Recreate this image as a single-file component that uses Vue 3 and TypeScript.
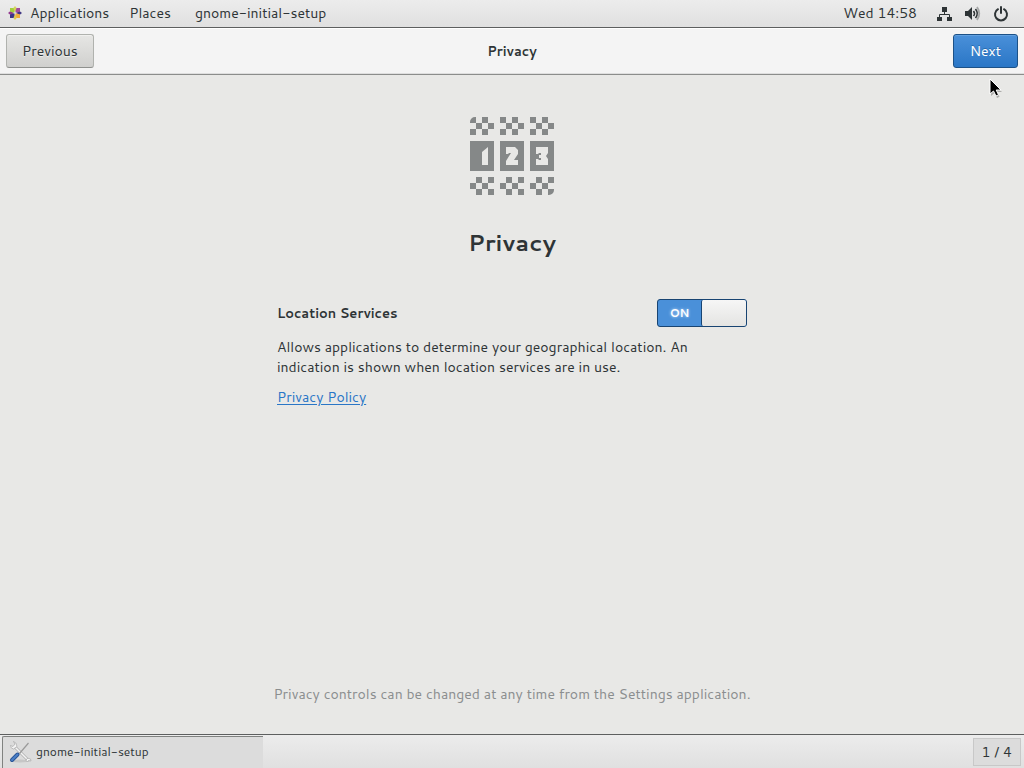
<script setup lang="ts">
import { ref } from 'vue'

const locationServices = ref(true)

interface Cell { x: number; y: number }

const columns = [0, 30, 60]

function checker(top: number, offset: number): Cell[] {
  const cells: Cell[] = []
  for (const left of columns) {
    for (let row = 0; row < 3; row++) {
      for (let col = 0; col < 4; col++) {
        if ((row + col + offset) % 2 === 0) cells.push({ x: left + col * 6, y: top + row * 6 })
      }
    }
  }
  return cells
}

const cells = [...checker(0, 0), ...checker(60, 1)].filter(
  (c) => !(c.x === 0 && c.y === 0) && !(c.x === 78 && c.y === 72),
)
</script>

<template>
  <div class="desktop">
    <header class="topbar">
      <nav class="menus">
        <button class="menu apps" type="button">
          <svg class="logo" width="14" height="14" viewBox="0 0 14 14" aria-hidden="true">
            <path d="M7 0l2 2.500L7 6 5 2.500z" fill="#d6d65c" />
            <path d="M7 14l2-2.500L7 8l-2 3.500z" fill="#dccb52" />
            <path d="M0 7l2.500-2L6 7 2.500 9z" fill="#93388f" />
            <path d="M14 7l-2.500-2L8 7l3.500 2z" fill="#3f3583" />
            <path d="M2 2h3.500L6.500 5v1.500H5L2 5.500z" fill="#a3cf3c" />
            <path d="M12 2H8.500L7.500 5v1.500H9l3-1z" fill="#a44c9b" />
            <path d="M2 12V8.500l3-1h1.500V9l-1 3z" fill="#3c3487" />
            <path d="M12 12V8.500l-3-1H7.500V9l1 3z" fill="#f0ac3a" />
          </svg>
          Applications
        </button>
        <button class="menu places" type="button">Places</button>
        <button class="menu" type="button">gnome-initial-setup</button>
      </nav>
      <div class="status">
        <time class="clock">Wed 14:58</time>
        <svg class="net" width="16" height="16" viewBox="0 0 16 16" aria-hidden="true">
          <path d="M5 1h5v5H5zM0 11h5v4H0zM10 11h5v4h-5z" fill="#2e3436" />
          <path d="M7.500 6v2.500M2.500 11V8.500h10V11" fill="none" stroke="#2e3436" />
        </svg>
        <svg class="vol" width="16" height="16" viewBox="0 0 16 16" aria-hidden="true">
          <path d="M0 5h3l4-4v13l-4-4H0z" fill="#2e3436" />
          <path d="M8.500 5q2 2.500 0 5M10.500 3q3.500 4.500 0 9" fill="none" stroke="#2e3436" stroke-width="1.600" />
          <path d="M12 1q4.500 6.500 0 13" fill="none" stroke="#a4a6a6" stroke-width="1.800" />
        </svg>
        <svg width="16" height="16" viewBox="0 0 16 16" aria-hidden="true">
          <path d="M5 3.200a6 6 0 1 0 6 0M8 1v6" fill="none" stroke="#2e3436" stroke-width="2" stroke-linecap="round" />
        </svg>
      </div>
    </header>

    <div class="headerbar">
      <div class="side"><button class="btn" type="button">Previous</button></div>
      <div class="title">Privacy</div>
      <div class="side end"><button class="btn primary" type="button">Next</button></div>
      <svg class="pointer" width="14" height="22" viewBox="0 0 14 22" aria-hidden="true">
        <path d="M2 3v15l3.500-3 2.500 5 2.500-1.200-2.300-4.800H13z" fill="#000" opacity=".25" />
        <path d="M1 1v15l3.500-3 2.500 5 2.500-1.200-2.300-4.800H12z" fill="#000" stroke="#fff" />
      </svg>
    </div>

    <main class="page">
      <svg class="emblem" width="84" height="78" viewBox="0 0 84 78" fill="#858888" aria-hidden="true">
        <path d="M6 0v6H0V5a5 5 0 0 1 5-5zM78 78v-6h6v1a5 5 0 0 1-5 5z" />
        <rect v-for="c in cells" :key="`${c.x}-${c.y}`" :x="c.x" :y="c.y" width="6" height="6" />
        <rect v-for="x in columns" :key="x" :x="x" y="24" width="24" height="30" />
        <g fill="#e8e8e6">
          <path d="M18 30v18h-6V35z" />
          <path d="M36 30h9l3 3v4l-4 6h4v5H36v-4l5-8h-2l-1 1h-2z" />
          <path d="M66 30h12v6l-2 3 2 3v6H66v-6h2l1 1h2v-2h-2v-3h2v-2h-2l-1 1h-2z" />
        </g>
      </svg>
      <h1>Privacy</h1>
      <section class="settings">
        <div class="row">
          <label class="name" for="location">Location Services</label>
          <label class="switch">
            <input id="location" v-model="locationServices" type="checkbox" role="switch" />
            <span class="state">{{ locationServices ? 'ON' : 'OFF' }}</span>
            <span class="knob"></span>
          </label>
        </div>
        <p class="about">Allows applications to determine your geographical location. An indication is shown when location services are in use.</p>
        <a class="policy" href="#">Privacy Policy</a>
      </section>
      <p class="hint">Privacy controls can be changed at any time from the Settings application.</p>
    </main>

    <footer class="taskbar">
      <button class="task" type="button">
        <svg width="24" height="24" viewBox="0 0 24 24" aria-hidden="true">
          <ellipse cx="12" cy="21" rx="10" ry="1.500" fill="#c6c6c6" />
          <path d="M6 6l13 13" stroke="#a8a8a8" stroke-width="2.800" />
          <path d="M6 6l13 13" stroke="#f4f4f4" stroke-width="1.600" />
          <path d="M5.500 1.500L7 4 5 6.500 2.500 5.500q0 3 3 3.500L9 6.500Q8.500 2 5.500 1.500zM22.500 19q-3-1.500-4 0t1 3l1-1.500 2.500.5z" fill="#f5f5f5" stroke="#a8a8a8" stroke-width=".7" />
          <path d="M20.500 3l-9 10.500" stroke="#9a9a9a" stroke-width="1.200" />
          <path d="M9.500 14.500L4 20" stroke="#2a5597" stroke-width="4" stroke-linecap="round" />
          <path d="M9.500 14.500L4 20" stroke="#4a7fc6" stroke-width="2" stroke-linecap="round" />
        </svg>
        gnome-initial-setup
      </button>
      <button class="workspace" type="button">1 / 4</button>
    </footer>
  </div>
</template>

<style>
body {
  margin: 0;
}
</style>

<style scoped>
.desktop {
  display: flex;
  flex-direction: column;
  min-height: 100vh;
  background: #e8e8e6;
  color: #2e3436;
  font-family: Cantarell, "Noto Sans", "Open Sans", sans-serif;
  font-size: 14px;
  line-height: 20px;
}
button {
  font: inherit;
  color: inherit;
  margin: 0;
}
svg {
  display: block;
  flex: none;
}
.topbar {
  display: flex;
  justify-content: space-between;
  align-items: center;
  box-sizing: border-box;
  height: 28px;
  padding: 0 15px 0 8px;
  background: linear-gradient(#ececec, #e0e0e0);
  border-bottom: 1px solid #5d5f5f;
}
.menus,
.status,
.menu {
  display: flex;
  align-items: center;
}
.menus {
  gap: 20px;
}
.menu {
  gap: 8px;
  padding: 0 0 2px;
  border: 0;
  background: none;
}
.places {
  margin-right: 4px;
}
.clock {
  margin-right: 20px;
  padding-bottom: 2px;
}
.net,
.vol {
  margin-right: 12px;
}
.headerbar {
  position: relative;
  display: flex;
  align-items: center;
  box-sizing: border-box;
  height: 47px;
  padding: 0 6px;
  background: #f4f4f4;
  border-bottom: 1px solid #8b8d8b;
  box-shadow: inset 0 1px #fff, inset 0 -1px #dedede;
}
.side {
  flex: 1;
  display: flex;
}
.end {
  justify-content: flex-end;
}
.title,
.name {
  font-size: 13px;
  font-weight: 700;
}
.btn {
  height: 34px;
  padding: 0 15px;
  border: 1px solid #b0b2ae;
  border-bottom-color: #8f918e;
  border-radius: 3px;
  background: linear-gradient(#e6e6e4, #d0d0ce);
  box-shadow: inset 0 1px #f0f0ee;
  text-shadow: 0 1px #eee;
}
.primary {
  padding: 0 16px;
  border-color: #1c5187;
  background: linear-gradient(#4a90d9, #2a76c6);
  box-shadow: inset 0 1px #61a0e0;
  color: #fff;
  text-shadow: 0 -1px #2569ad;
}
.pointer {
  position: absolute;
  top: 50px;
  right: 21px;
}
.page {
  flex: 1;
  display: flex;
  flex-direction: column;
  align-items: center;
  padding: 42px 24px 30px;
}
h1 {
  margin: 30px 0 0;
  font-size: 23px;
  line-height: 34px;
}
.settings {
  width: 100%;
  max-width: 470px;
  margin-top: 40px;
}
.row {
  display: flex;
  justify-content: space-between;
  align-items: center;
}
.switch {
  position: relative;
  display: flex;
  box-sizing: border-box;
  width: 90px;
  height: 28px;
  border: 1px solid #184472;
  border-radius: 3px;
  background: #4a90d9;
}
.switch input {
  position: absolute;
  inset: 0;
  width: 100%;
  height: 100%;
  margin: 0;
  opacity: 0;
}
.state {
  width: 43px;
  color: #fff;
  font-size: 11px;
  font-weight: 700;
  line-height: 26px;
  text-align: center;
  text-shadow: 0 0 3px #cfe4ff;
}
.knob {
  flex: 1;
  border-left: 1px solid #184472;
  border-radius: 2px;
  background: linear-gradient(#f6f6f6, #e4e4e2);
}
.about {
  max-width: 440px;
  margin: 10px 0;
}
.policy {
  color: #2a76c6;
  text-underline-offset: 2px;
}
.hint {
  margin: auto 0 0;
  color: #8b8e8f;
}
.taskbar {
  display: flex;
  justify-content: space-between;
  box-sizing: border-box;
  height: 34px;
  padding: 1px 3px 0 2px;
  border-top: 1px solid #5d5f5f;
  background: linear-gradient(#ececec, #e0e0e0);
}
.task {
  display: flex;
  align-items: center;
  gap: 4px;
  width: 261px;
  padding: 0 5px 2px;
  border: 0;
  border-top: 1px solid #808280;
  border-left: 1px solid #808280;
  border-radius: 2px 0 0 0;
  background: #dcdcdc;
  font-size: 12px;
}
.workspace {
  height: 28px;
  margin-top: 2px;
  padding: 0 8px;
  border: 1px solid #c8c8c8;
  background: #dcdcdc;
}
</style>
